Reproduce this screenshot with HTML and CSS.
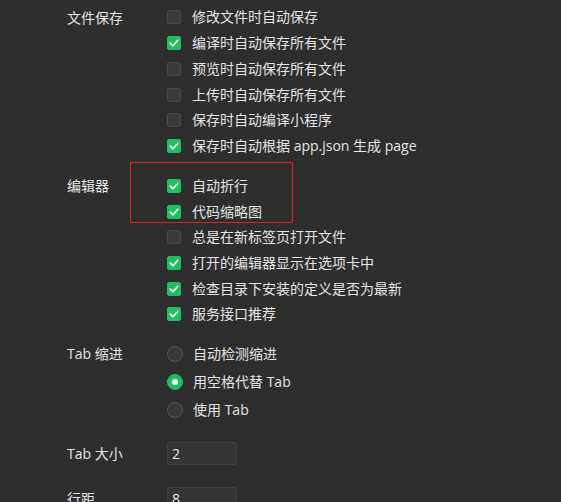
FILE: index.html
```html
<!DOCTYPE html>
<html lang="zh">
<head>
<meta charset="utf-8">
<link rel="stylesheet" href="styles.css">
</head>
<body>
<div class="settings">
  <section class="group g-file">
    <div class="label">文件保存</div>
    <div class="controls">
      <label class="row"><span class="cb"></span><span class="txt">修改文件时自动保存</span></label>
      <label class="row"><span class="cb on"><svg viewBox="0 0 14 14"><path d="M3.3 7.2 L6 9.8 L10.8 4.3"/></svg></span><span class="txt">编译时自动保存所有文件</span></label>
      <label class="row"><span class="cb"></span><span class="txt">预览时自动保存所有文件</span></label>
      <label class="row"><span class="cb"></span><span class="txt">上传时自动保存所有文件</span></label>
      <label class="row"><span class="cb"></span><span class="txt">保存时自动编译小程序</span></label>
      <label class="row"><span class="cb on"><svg viewBox="0 0 14 14"><path d="M3.3 7.2 L6 9.8 L10.8 4.3"/></svg></span><span class="txt">保存时自动根据 app.json 生成 page</span></label>
    </div>
  </section>
  <section class="group g-editor">
    <div class="label">编辑器</div>
    <div class="controls">
      <div class="highlight"></div>
      <label class="row"><span class="cb on"><svg viewBox="0 0 14 14"><path d="M3.3 7.2 L6 9.8 L10.8 4.3"/></svg></span><span class="txt">自动折行</span></label>
      <label class="row"><span class="cb on"><svg viewBox="0 0 14 14"><path d="M3.3 7.2 L6 9.8 L10.8 4.3"/></svg></span><span class="txt">代码缩略图</span></label>
      <label class="row"><span class="cb"></span><span class="txt">总是在新标签页打开文件</span></label>
      <label class="row"><span class="cb on"><svg viewBox="0 0 14 14"><path d="M3.3 7.2 L6 9.8 L10.8 4.3"/></svg></span><span class="txt">打开的编辑器显示在选项卡中</span></label>
      <label class="row"><span class="cb on"><svg viewBox="0 0 14 14"><path d="M3.3 7.2 L6 9.8 L10.8 4.3"/></svg></span><span class="txt">检查目录下安装的定义是否为最新</span></label>
      <label class="row"><span class="cb on"><svg viewBox="0 0 14 14"><path d="M3.3 7.2 L6 9.8 L10.8 4.3"/></svg></span><span class="txt">服务接口推荐</span></label>
    </div>
  </section>
  <section class="group g-indent">
    <div class="label lbl-radio">Tab 缩进</div>
    <div class="controls">
      <label class="row rrow"><span class="radio"></span><span class="txt">自动检测缩进</span></label>
      <label class="row rrow"><span class="radio on"></span><span class="txt">用空格代替 Tab</span></label>
      <label class="row rrow"><span class="radio"></span><span class="txt">使用 Tab</span></label>
    </div>
  </section>
  <section class="group g-size">
    <div class="label lbl-input">Tab 大小</div>
    <div class="controls"><div class="input">2</div></div>
  </section>
  <section class="group g-line">
    <div class="label lbl-input">行距</div>
    <div class="controls"><div class="input">8</div></div>
  </section>
</div>
</body>
</html>
```
FILE: styles.css
```css
html, body {
  margin: 0;
  padding: 0;
  background: #2e2e2e;
  height: 100%;
  overflow: hidden;
}
body {
  font-family: "Open Sans", "Noto Sans CJK SC", sans-serif;
  font-size: 14px;
  color: #e4e4e4;
}
.settings {
  padding: 4.6px 0 0 67px;
  display: flex;
  flex-direction: column;
}
.group {
  display: grid;
  grid-template-columns: 100px 1fr;
}
.g-editor { margin-top: 14.3px; }
.g-indent { margin-top: 12.7px; }
.g-size { margin-top: 18px; }
.g-line { margin-top: 22px; }
.label {
  height: 25.7px;
  line-height: 25.7px;
  white-space: nowrap;
}
.lbl-radio { height: 28px; line-height: 28px; }
.lbl-input { height: 23px; line-height: 23px; }
.controls {
  position: relative;
  display: flex;
  flex-direction: column;
}
.row {
  display: flex;
  align-items: center;
  height: 25.7px;
  white-space: nowrap;
}
.rrow { height: 28px; }
.cb {
  box-sizing: border-box;
  width: 14px;
  height: 14px;
  border: 1px solid #4a4a4a;
  background: #3a3a3a;
  border-radius: 2px;
  margin-right: 11px;
  flex: none;
  display: flex;
}
.cb.on {
  background: #1fbf5f;
  border-color: #1fbf5f;
}
.cb svg {
  width: 14px;
  height: 14px;
  margin: -1px;
}
.cb svg path {
  fill: none;
  stroke: #fff;
  stroke-width: 1.7;
  stroke-linecap: round;
  stroke-linejoin: round;
}
.radio {
  box-sizing: border-box;
  width: 16px;
  height: 16px;
  border-radius: 50%;
  border: 1px solid #555;
  background: #383838;
  margin-right: 10px;
  flex: none;
  display: flex;
  align-items: center;
  justify-content: center;
}
.radio.on {
  background: #1fbf5f;
  border-color: #1fbf5f;
}
.radio.on::after {
  content: "";
  width: 6px;
  height: 6px;
  border-radius: 50%;
  background: #fff;
}
.txt { line-height: 1; }
.highlight {
  position: absolute;
  left: -37px;
  top: -11px;
  width: 163px;
  height: 61px;
  box-sizing: border-box;
  border: 1px solid #e0201e;
  pointer-events: none;
}
.input {
  box-sizing: border-box;
  width: 70px;
  height: 23px;
  background: #343434;
  border: 1px solid #3f3f3f;
  border-radius: 2px;
  padding-left: 4px;
  line-height: 21px;
  color: #eaeaea;
}
```
